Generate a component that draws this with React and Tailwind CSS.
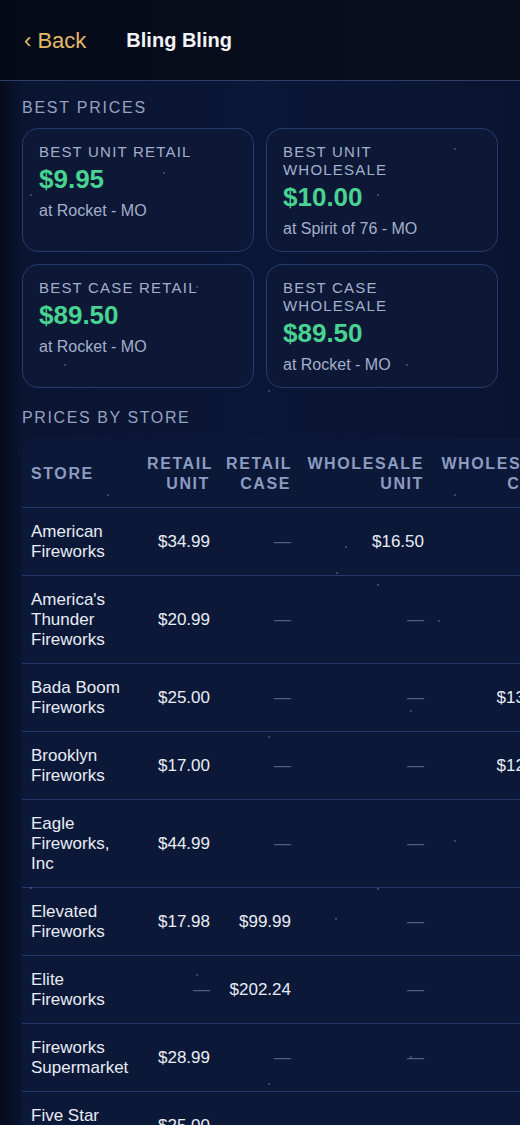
import { Fragment } from "react";

const best = [
  { label: "BEST UNIT RETAIL", value: "$9.95", where: "at Rocket - MO" },
  { label: "BEST UNIT WHOLESALE", value: "$10.00", where: "at Spirit of 76 - MO" },
  { label: "BEST CASE RETAIL", value: "$89.50", where: "at Rocket - MO" },
  { label: "BEST CASE WHOLESALE", value: "$89.50", where: "at Rocket - MO" },
];

const stores = [
  { name: "American Fireworks", prices: ["$34.99", null, "$16.50", null] },
  { name: "America's Thunder Fireworks", prices: ["$20.99", null, null, null] },
  { name: "Bada Boom Fireworks", prices: ["$25.00", null, null, "$135.00"] },
  { name: "Brooklyn Fireworks", prices: ["$17.00", null, null, "$125.00"] },
  { name: "Eagle Fireworks, Inc", prices: ["$44.99", null, null, null] },
  { name: "Elevated Fireworks", prices: ["$17.98", "$99.99", null, null] },
  { name: "Elite Fireworks", prices: [null, "$202.24", null, null] },
  { name: "Fireworks Supermarket", prices: ["$28.99", null, null, null] },
  { name: "Five Star Fireworks", prices: ["$25.00", null, null, null] },
];

const stars = [
  [163, 172], [30, 194], [454, 148], [377, 194], [196, 286], [64, 364],
  [406, 364], [268, 390], [107, 494], [454, 494], [345, 546], [336, 572],
  [377, 584], [438, 620], [410, 710], [268, 736], [454, 840], [377, 888],
  [335, 918], [196, 974], [410, 1056], [268, 1083], [30, 887],
];

export default function App() {
  return (
    <div className="relative w-[520px] h-[1125px] overflow-hidden bg-[linear-gradient(90deg,#050b1c_0px,#0a1532_22px,#0b1736_260px,#0a1431_520px)] font-['Liberation_Sans',Arial,sans-serif]">
      <header className="h-[81px] flex items-center px-[24px] bg-[linear-gradient(90deg,#050a17,#080d1d_60%,#0a0f1f)] border-b border-[#2b3f68]">
        <button className="text-[22px] text-[#e3b866]">‹ Back</button>
        <h1 className="ml-[40px] text-[20px] font-bold text-[#f1f3f8]">Bling Bling</h1>
      </header>

      <div className="px-[22px] pt-[17px]">
        <h2 className="text-[16px] leading-[20px] tracking-[0.11em] text-[#95a2c1] mb-[10px]">BEST PRICES</h2>
        <div className="grid grid-cols-2 gap-[12px]">
          {best.map((b) => (
            <div
              key={b.label}
              className="rounded-[16px] border border-[#253b6c] bg-[#0c1836] px-[16px] pt-[14px] pb-[12px]"
            >
              <p className="text-[15px] leading-[18px] tracking-[0.08em] text-[#a4b0cb] pr-[20px]">{b.label}</p>
              <p className="mt-[2px] text-[26px] leading-[32px] font-bold text-[#48d391]">{b.value}</p>
              <p className="mt-[6px] text-[16px] leading-[20px] text-[#a4b0cb]">{b.where}</p>
            </div>
          ))}
        </div>

        <h2 className="mt-[20px] text-[16px] leading-[20px] tracking-[0.1em] text-[#95a2c1] mb-[10px]">PRICES BY STORE</h2>
        <div className="-mr-[22px] overflow-hidden rounded-tl-[14px] bg-[#0c1838]">
          <table className="table-fixed w-[544px] border-collapse">
            <colgroup>
              <col className="w-[117px]" />
              <col className="w-[79px]" />
              <col className="w-[81px]" />
              <col className="w-[133px]" />
              <col className="w-[134px]" />
            </colgroup>
            <thead>
              <tr className="border-b border-[#22396a]">
                {["STORE", "RETAIL UNIT", "RETAIL CASE", "WHOLESALE UNIT", "WHOLESALE CASE"].map((h, i) => (
                  <th
                    key={h}
                    className={
                      "pt-[16px] pb-[13px] text-[16px] leading-[20px] font-bold tracking-[0.1em] text-[#8c9bc0] align-middle " +
                      (i === 0 ? "pl-[9px] pr-[8px] text-left" : "px-[8px] text-right")
                    }
                  >
                    {h.split(" ").map((w, j) => (
                      <Fragment key={w}>
                        {j > 0 && i > 0 && <br />}
                        {j > 0 && i === 0 && " "}
                        {w}
                      </Fragment>
                    ))}
                  </th>
                ))}
              </tr>
            </thead>
            <tbody>
              {stores.map((s) => (
                <tr key={s.name} className="border-b border-[#22396a]">
                  <td className="pl-[9px] pr-[8px] pt-[14px] pb-[13px] text-[17px] leading-[20px] text-[#e8ecf5] align-middle">
                    {s.name}
                  </td>
                  {s.prices.map((p, i) => (
                    <td
                      key={i}
                      className="px-[8px] text-right text-[17px] leading-[20px] align-middle"
                    >
                      {p ? (
                        <span className="text-[#e8ecf5]">{p}</span>
                      ) : (
                        <span className="text-[#4f5f84]">—</span>
                      )}
                    </td>
                  ))}
                </tr>
              ))}
            </tbody>
          </table>
        </div>
      </div>

      {stars.map(([x, y], i) => (
        <span
          key={i}
          className="absolute w-[2px] h-[2px] rounded-full bg-[#5f6f95] opacity-70"
          style={{ left: x, top: y }}
        />
      ))}
    </div>
  );
}
